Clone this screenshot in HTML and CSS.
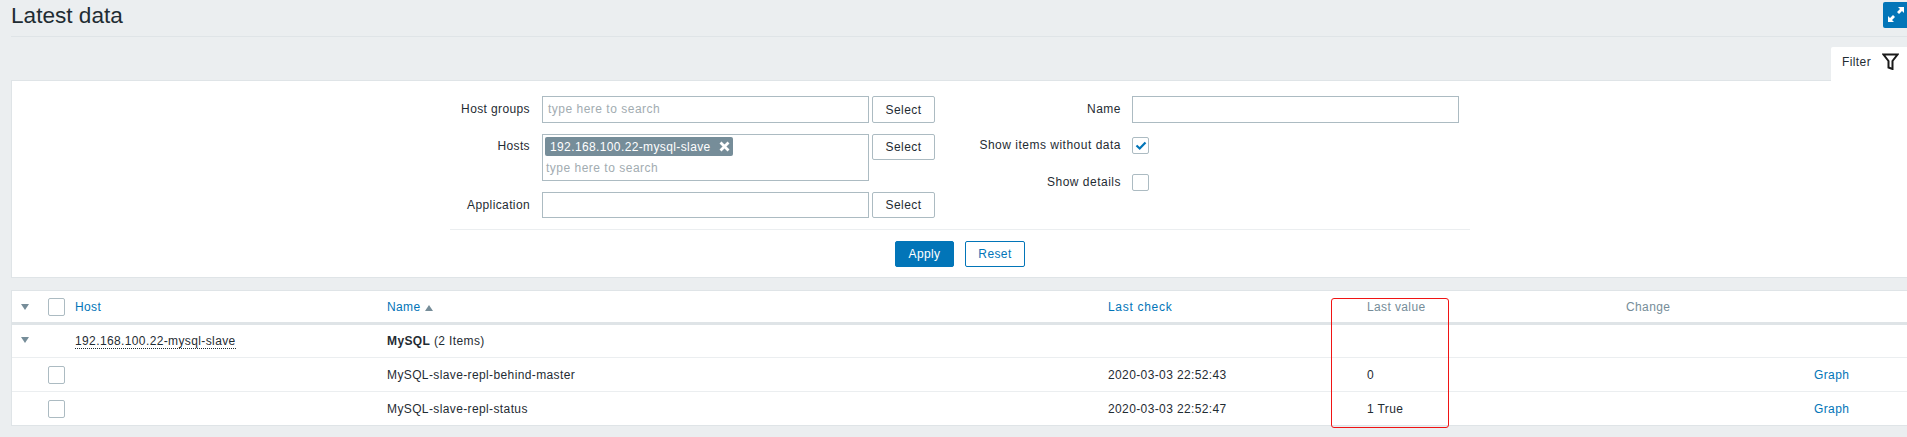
FILE: index.html
```html
<!DOCTYPE html>
<html lang="en">
<head>
    <meta charset="UTF-8">
    <meta name="viewport" content="width=device-width, initial-scale=1.0">
    <title>Latest data</title>
    <link rel="stylesheet" href="styles.css">
</head>
<body>
    <header class="page-header">
        <h1>Latest data</h1>
        <button class="btn-fullscreen" type="button" aria-label="Fullscreen">
            <svg width="24" height="26" viewBox="0 0 24 26">
                <path d="M15 5h6v6l-2-2-3 3-2-2 3-3z" fill="#fff"/>
                <path d="M11 20H5v-6l2 2 3-3 2 2-3 3z" fill="#fff"/>
            </svg>
        </button>
    </header>

    <div class="filter-tabs">
        <div class="filter-tab">
            <span>Filter</span>
            <svg width="17" height="17" viewBox="0 0 17 17">
                <path d="M1.500 1.500h14l-5 6.500v8l-4-1.500V8z" fill="none" stroke="#1a1a1a" stroke-width="2"/>
            </svg>
        </div>
    </div>

    <section class="filter-panel">
        <div class="filter-body">
            <div class="filter-columns">
                <div class="filter-col-left">
                    <div class="form-row">
                        <label>Host groups</label>
                        <div class="text-field placeholder">type here to search</div>
                        <button class="btn-select" type="button">Select</button>
                    </div>
                    <div class="form-row">
                        <label class="label-hosts">Hosts</label>
                        <div class="multiselect">
                            <span class="chip">192.168.100.22-mysql-slave
                                <svg width="11" height="11" viewBox="0 0 11 11">
                                    <path d="M1.500 1.500l8 8M9.500 1.500l-8 8" stroke="#fff" stroke-width="2.800"/>
                                </svg>
                            </span>
                            <span class="placeholder">type here to search</span>
                        </div>
                        <button class="btn-select" type="button">Select</button>
                    </div>
                    <div class="form-row row-short">
                        <label>Application</label>
                        <div class="text-field"></div>
                        <button class="btn-select" type="button">Select</button>
                    </div>
                </div>
                <div class="filter-col-right">
                    <div class="form-row">
                        <label>Name</label>
                        <div class="text-field"></div>
                    </div>
                    <div class="form-row">
                        <label>Show items without data</label>
                        <span class="checkbox">
                            <svg width="12" height="10" viewBox="0 0 12 10">
                                <path d="M1.500 4.500l3.200 3 5.800-6" fill="none" stroke="#0275b8" stroke-width="2.200"/>
                            </svg>
                        </span>
                    </div>
                    <div class="form-row row-details">
                        <label>Show details</label>
                        <span class="checkbox"></span>
                    </div>
                </div>
            </div>
            <div class="filter-actions">
                <button class="btn-apply" type="button">Apply</button>
                <button class="btn-reset" type="button">Reset</button>
            </div>
        </div>
    </section>

    <table class="data-table">
        <colgroup>
            <col class="col-toggle">
            <col class="col-check">
            <col class="col-host">
            <col class="col-name">
            <col class="col-time">
            <col class="col-value">
            <col class="col-change">
            <col>
        </colgroup>
        <thead>
            <tr>
                <th class="toggle"><span class="arrow-down"></span></th>
                <th><span class="row-check"></span></th>
                <th><a href="#">Host</a></th>
                <th><a href="#">Name</a><span class="arrow-up"></span></th>
                <th><a href="#" class="link-wide">Last check</a></th>
                <th class="muted">Last value</th>
                <th class="muted">Change</th>
                <th></th>
            </tr>
        </thead>
        <tbody>
            <tr class="group-row">
                <td class="toggle"><span class="arrow-down"></span></td>
                <td></td>
                <td><span class="host-link">192.168.100.22-mysql-slave</span></td>
                <td><strong>MySQL</strong> (2 Items)</td>
                <td></td>
                <td></td>
                <td></td>
                <td></td>
            </tr>
            <tr>
                <td></td>
                <td><span class="row-check"></span></td>
                <td></td>
                <td>MySQL-slave-repl-behind-master</td>
                <td>2020-03-03 22:52:43</td>
                <td>0</td>
                <td></td>
                <td><a href="#">Graph</a></td>
            </tr>
            <tr>
                <td></td>
                <td><span class="row-check"></span></td>
                <td></td>
                <td>MySQL-slave-repl-status</td>
                <td>2020-03-03 22:52:47</td>
                <td>1 True</td>
                <td></td>
                <td><a href="#">Graph</a></td>
            </tr>
        </tbody>
    </table>

    <div class="red-box"></div>
</body>
</html>
```

FILE: styles.css
```css
body {
    font-family: "Liberation Sans", Arial, sans-serif;
    font-size: 12px;
    color: #1f2c33;
    margin: 0;
    height: 437px;
    overflow: hidden;
    position: relative;
    background-color: #ebeef0;
}
button {
    font-family: inherit;
    font-size: 12px;
    letter-spacing: 0.4px;
    padding: 0;
    border-radius: 2px;
    cursor: pointer;
}
a {
    color: #0275b8;
    text-decoration: none;
}

.page-header {
    display: flex;
    justify-content: space-between;
    align-items: flex-start;
    height: 36px;
    margin-left: 11px;
    border-bottom: 1px solid #dfe4e7;
}
.page-header h1 {
    margin: 0;
    font-size: 22.6px;
    font-weight: normal;
    line-height: 31px;
}
.btn-fullscreen {
    width: 24px;
    height: 26px;
    margin-top: 2px;
    background: #0275b8;
    border: none;
    border-radius: 2px 0 0 2px;
}
.btn-fullscreen svg {
    display: block;
}

.filter-tabs {
    display: flex;
    justify-content: flex-end;
    height: 43px;
    align-items: flex-end;
}
.filter-tab {
    display: flex;
    align-items: center;
    gap: 11px;
    width: 76px;
    height: 34px;
    box-sizing: border-box;
    padding: 0 0 5px 11px;
    background: white;
    border-radius: 2px 0 0 0;
    letter-spacing: 0.4px;
    position: relative;
    z-index: 1;
    margin-bottom: -1px;
}

.filter-panel {
    margin-left: 11px;
    height: 198px;
    background: white;
    border: 1px solid #dfe4e7;
    border-right: none;
    box-sizing: border-box;
    letter-spacing: 0.5px;
}
.filter-body {
    width: 1020px;
    margin-left: 438px;
    padding-top: 15px;
}
.filter-columns {
    display: flex;
    height: 133px;
    border-bottom: 1px solid #ebeef0;
}
.filter-col-left {
    display: flex;
    flex-direction: column;
    gap: 11px;
    width: 485px;
}
.filter-col-right {
    display: flex;
    flex-direction: column;
    gap: 9px;
    margin-left: 24px;
}
.form-row {
    display: flex;
    align-items: flex-start;
}
.form-row label {
    line-height: 27px;
    text-align: right;
    white-space: nowrap;
}
.filter-col-left label {
    width: 80px;
    margin-right: 12px;
    letter-spacing: 0.38px;
}
.filter-col-right label {
    width: 162px;
    margin-right: 11px;
}
.form-row .label-hosts {
    line-height: 24px;
}
.row-details {
    margin-top: 1px;
}
.text-field {
    width: 327px;
    height: 27px;
    box-sizing: border-box;
    border: 1px solid #acbbc2;
    padding-left: 5px;
    line-height: 25px;
}
.row-short .text-field,
.row-short .btn-select {
    height: 26px;
}
.row-short label {
    line-height: 26px;
}
.placeholder {
    color: #a2acb1;
}
.multiselect {
    width: 327px;
    height: 47px;
    box-sizing: border-box;
    border: 1px solid #acbbc2;
    padding: 2px 0 0 2px;
}
.multiselect .placeholder {
    display: block;
    margin: 3px 0 0 1px;
    line-height: 19px;
}
.chip {
    display: flex;
    align-items: center;
    gap: 8px;
    width: 188px;
    height: 19px;
    box-sizing: border-box;
    padding-left: 5px;
    background: #768d99;
    border-radius: 2px;
    color: white;
    white-space: nowrap;
    letter-spacing: 0.38px;
}
.btn-select {
    width: 63px;
    height: 27px;
    margin-left: 3px;
    background: white;
    color: #1f2c33;
    border: 1px solid #acbbc2;
}
.multiselect + .btn-select {
    height: 26px;
}
.checkbox {
    display: flex;
    align-items: center;
    justify-content: center;
    width: 17px;
    height: 17px;
    margin-top: 5px;
    box-sizing: border-box;
    border: 1px solid #acbbc2;
    border-radius: 2px;
}

.filter-actions {
    display: flex;
    justify-content: center;
    gap: 11px;
    padding-top: 11px;
}
.btn-apply,
.btn-reset {
    width: 60px;
    height: 26px;
    border: 1px solid #0275b8;
}
.btn-apply {
    width: 59px;
    background: #0275b8;
    color: white;
}
.btn-reset {
    background: white;
    color: #0275b8;
}

.data-table {
    margin: 12px 0 0 11px;
    width: 1896px;
    table-layout: fixed;
    border-collapse: separate;
    border-spacing: 0;
    background: white;
    border: 1px solid #dfe4e7;
    border-right: none;
    letter-spacing: 0.38px;
}
.col-toggle { width: 31px; }
.col-check { width: 27px; }
.col-host { width: 312px; }
.col-name { width: 721px; }
.col-time { width: 259px; }
.col-value { width: 259px; }
.col-change { width: 188px; }
.data-table th,
.data-table td {
    padding: 0 0 0 5px;
    text-align: left;
    font-weight: normal;
    white-space: nowrap;
}
.data-table .toggle {
    padding-left: 9px;
}
.data-table th {
    height: 34px;
    border-bottom: 3px solid #dfe4e7;
    box-sizing: border-box;
}
.data-table td {
    height: 33px;
    border-bottom: 1px solid #ebeef0;
}
.data-table .group-row td {
    height: 32px;
}
.data-table tbody tr:last-child td {
    border-bottom: none;
}
.data-table strong {
    font-weight: bold;
}
.link-wide {
    letter-spacing: 0.7px;
}
.data-table th.muted {
    color: #768d99;
}
.row-check {
    display: block;
    width: 17px;
    height: 18px;
    box-sizing: border-box;
    border: 1px solid #acbbc2;
    border-radius: 2px;
    background: white;
}
.arrow-down {
    display: block;
    width: 0;
    height: 0;
    border-left: 4px solid transparent;
    border-right: 4px solid transparent;
    border-top: 6px solid #768d99;
}
.group-row .arrow-down {
    margin-bottom: 2px;
}
.arrow-up {
    display: inline-block;
    width: 0;
    height: 0;
    margin-left: 4px;
    border-left: 4px solid transparent;
    border-right: 4px solid transparent;
    border-bottom: 6px solid #768d99;
}
.host-link {
    border-bottom: 1px dotted #1f2c33;
}
.red-box {
    position: absolute;
    left: 1331px;
    top: 298px;
    width: 118px;
    height: 130px;
    box-sizing: border-box;
    border: 1px solid #f01414;
    border-radius: 3px;
}
```
